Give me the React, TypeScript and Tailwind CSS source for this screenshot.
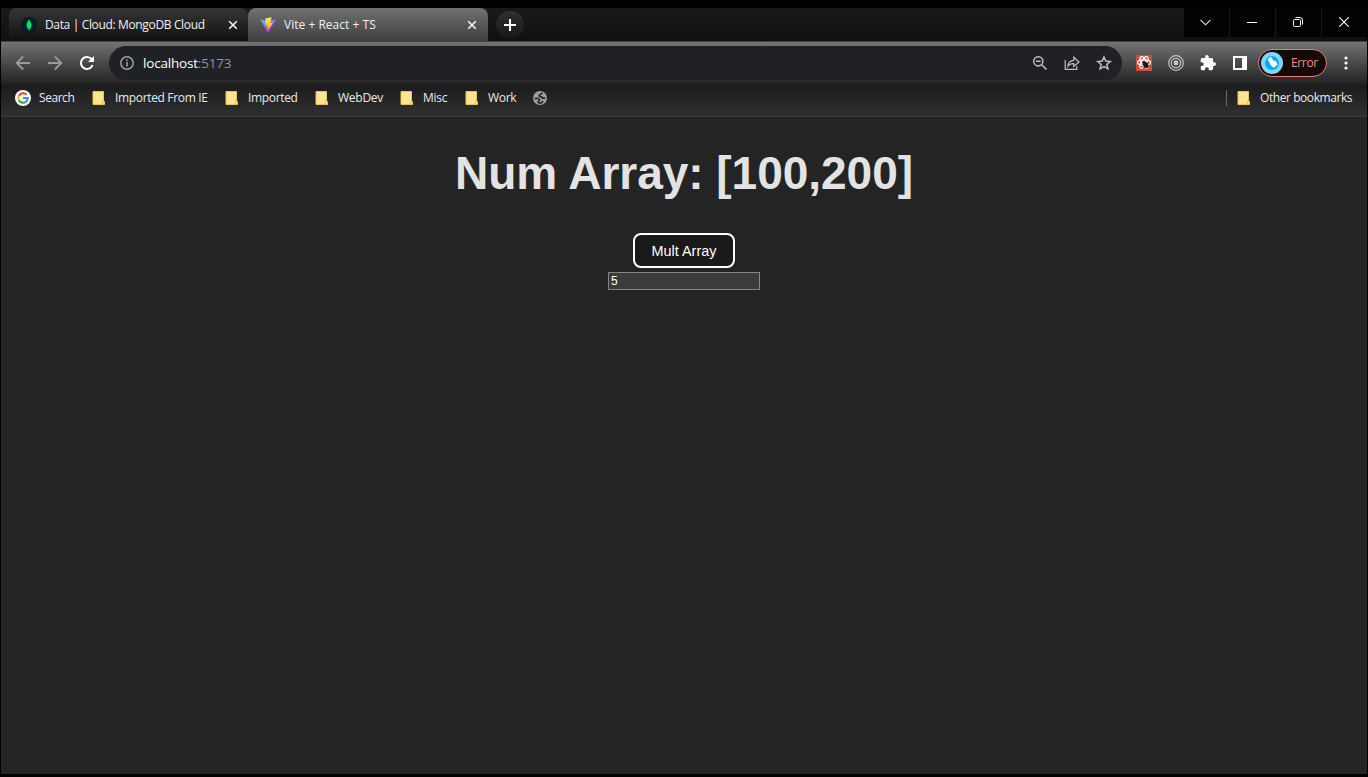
import React from "react";

const ui = "font-['Open_Sans','Noto_Sans',sans-serif]";

function Folder() {
  return (
    <svg width="14" height="16" viewBox="0 0 14 16" className="shrink-0">
      <path d="M1 1.500h10.500v10h1v3H1z" fill="#ffe48f" stroke="#ebc44b" strokeWidth="1" />
      <path d="M10.500 14.500v-3h1" fill="none" stroke="#ebc44b" />
    </svg>
  );
}

function Close() {
  return (
    <svg width="10" height="10" viewBox="0 0 10 10" className="shrink-0">
      <path d="M1.200 1.200l7.600 7.600M8.800 1.200L1.200 8.800" stroke="#f4f4f4" strokeWidth="1.600" />
    </svg>
  );
}

function TabStrip() {
  return (
    <div className="flex h-[33px] shrink-0 bg-gradient-to-b from-[#1a1a1a] to-[#101010] pl-2">
      <div className="flex h-[33px] w-[239px] items-center rounded-t-lg rounded-br-lg bg-gradient-to-b from-[#373737] to-[#111111] pl-3">
        <svg width="16" height="16" viewBox="0 0 16 16" className="shrink-0">
          <circle cx="8" cy="8" r="8" fill="#021e2b" />
          <path d="M8 2.200C6.300 4.500 5.600 6.300 5.600 8.200c0 1.900 1 3.300 2.100 4.100l.1 1.500h.5l.2-1.500c1.100-.8 2-2.200 2-4.100C10.500 6.300 9.700 4.500 8 2.200z" fill="#00ed64" />
          <path d="M8.050 4v9" stroke="#00a857" strokeWidth=".6" />
        </svg>
        <span className="ml-2 w-[183px] pt-px text-[12px] tracking-[-0.35px] text-[#f1f1f1]">Data | Cloud: MongoDB Cloud</span>
        <Close />
      </div>
      <div className="flex h-[33px] w-[240px] items-center rounded-t-lg bg-gradient-to-b from-[#717171] to-[#404040] pl-3">
        <svg width="16" height="16" viewBox="0 0 16 16" className="shrink-0">
          <defs>
            <linearGradient id="viteV" x1="0" y1="0" x2=".5" y2=".8"><stop stopColor="#41d1ff" /><stop offset="1" stopColor="#bd34fe" /></linearGradient>
            <linearGradient id="viteBolt" x1="0" y1="0" x2="0" y2="1"><stop stopColor="#ffea55" /><stop offset="1" stopColor="#ffa800" /></linearGradient>
          </defs>
          <path d="M.3 2.600L8 16l7.800-13.400L8 4z" fill="url(#viteV)" />
          <path d="M11.600.2L5.500 1.300 5.200 7.900l2.300-.4-.6 3.200 1.600-.4-1 4 5.300-8.600-2.400.3z" fill="url(#viteBolt)" />
        </svg>
        <span className="ml-2 w-[183px] pt-px text-[12px] tracking-[0.02px] text-[#f1f1f1]">Vite + React + TS</span>
        <Close />
      </div>
      <div className="mt-[3px] ml-2 flex size-7 items-center justify-center rounded-full bg-gradient-to-b from-[#303030] to-[#171717]">
        <svg width="12" height="12" viewBox="0 0 12 12"><path d="M6 0v12M0 6h12" stroke="#fff" strokeWidth="2" /></svg>
      </div>
      <div className="ml-auto flex h-[29px] w-[183px] bg-[#030303]">
        <div className="flex w-[46px] items-center justify-center border-r border-[#191919] pr-[2px]">
          <svg width="11" height="7" viewBox="0 0 11 7"><path d="M.5.8l5 5 5-5" fill="none" stroke="#e6e6e6" strokeWidth="1.100" /></svg>
        </div>
        <div className="flex w-[46px] items-center justify-center border-r border-[#191919] pr-[2px]">
          <svg width="10" height="10" viewBox="0 0 10 10"><path d="M0 4.500h10" stroke="#fff" /></svg>
        </div>
        <div className="flex w-[46px] items-center justify-center border-r border-[#191919] pr-px pb-px">
          <svg width="10" height="10" viewBox="0 0 10 10" fill="none" stroke="#f0f0f0"><rect x=".5" y="2.500" width="7" height="7" rx="1.300" /><path d="M2.500.5h4.500a2.500 2.500 0 0 1 2.500 2.500v4.500" /></svg>
        </div>
        <div className="flex w-[45px] items-center justify-center pr-px pb-px">
          <svg width="10" height="10" viewBox="0 0 10 10"><path d="M.2.2l9.600 9.600M9.800.2L.2 9.800" stroke="#fff" strokeWidth="1.100" /></svg>
        </div>
      </div>
    </div>
  );
}

function Toolbar() {
  return (
    <div className="flex h-[43px] shrink-0 items-center border-t border-[#424242] bg-gradient-to-b from-[#737373] to-[#232323] pl-[14px]">
      <svg width="16" height="16" viewBox="0 0 16 16" fill="none" stroke="#9a9a9a" strokeWidth="1.800"><path d="M15 8H2M8.200 1.500L1.700 8l6.500 6.500" /></svg>
      <svg className="ml-4" width="16" height="16" viewBox="0 0 16 16" fill="none" stroke="#9a9a9a" strokeWidth="1.800"><path d="M1 8h13M7.800 1.500L14.300 8l-6.500 6.500" /></svg>
      <svg className="ml-4" width="16" height="16" viewBox="0 0 16 16"><path d="M13.600 10A6 6 0 1 1 12.600 4.200L14 5.700" fill="none" stroke="#fff" strokeWidth="2" /><path d="M15 1v6H9z" fill="#fff" /></svg>
      <div className="ml-[14px] flex h-[34px] w-[1013px] shrink-0 items-center rounded-full bg-[#202124] pl-[11px]">
        <svg width="14" height="14" viewBox="0 0 14 14"><circle cx="7" cy="7" r="6.200" fill="none" stroke="#9aa0a6" strokeWidth="1.500" /><path d="M7 6v4.500M7 3.500v1.500" stroke="#9aa0a6" strokeWidth="1.600" /></svg>
        <span className="ml-[9px] text-[13.500px] tracking-[-0.19px] text-[#8e9297]"><span className="text-white">localhost</span>:5173</span>
        <div className="mr-[10px] ml-auto flex items-center gap-4 text-[#bdc1c6]">
          <svg width="16" height="16" viewBox="0 0 16 16" fill="none" stroke="currentColor" strokeWidth="1.500"><circle cx="6.300" cy="6.300" r="4.600" /><path d="M9.700 9.700l4.800 4.800M4 6.300h4.600" /></svg>
          <svg width="16" height="16" viewBox="0 0 16 16" fill="none" stroke="currentColor" strokeWidth="1.200"><path d="M1.200 5v9.400h11.600v-3.200M3.800 11.200c.4-3.800 2.500-5.700 6-5.800V2.200L15 7l-5.200 4.500V8.600C7 8.500 5.200 9.300 3.800 11.200z" /></svg>
          <svg width="16" height="16" viewBox="0 0 16 16" fill="none" stroke="currentColor" strokeWidth="1.500"><path d="M8 2l1.750 4.100 4.450.4-3.350 2.950 1 4.350L8 11.500l-3.850 2.300 1-4.350L1.800 6.500l4.450-.4z" /></svg>
        </div>
      </div>
      <svg className="ml-[14px] shrink-0" width="16" height="16" viewBox="0 0 16 16">
        <path d="M0 0h16v16H0z" fill="#d94a3b" />
        <g fill="none" stroke="#fff" strokeWidth="1.200"><ellipse cx="8" cy="7.500" rx="6.500" ry="2.600" /><ellipse cx="8" cy="7.500" rx="6.500" ry="2.600" transform="rotate(60 8 7.500)" /><ellipse cx="8" cy="7.500" rx="6.500" ry="2.600" transform="rotate(120 8 7.500)" /></g>
        <ellipse cx="9.800" cy="10.200" rx="2.500" ry="3.200" fill="#201b1b" transform="rotate(-30 9.800 10.200)" /><circle cx="7.700" cy="7.500" r="1.300" fill="#201b1b" /><path d="M6.500 9.500l6.500 1.500M7.500 13l5-5.500" stroke="#201b1b" />
      </svg>
      <svg className="ml-4 shrink-0" width="16" height="16" viewBox="0 0 16 16" fill="none" stroke="#c4c4c4" strokeWidth="1.200"><circle cx="8" cy="8" r="7.300" /><circle cx="8" cy="8" r="4.700" /><circle cx="8" cy="8" r="2.400" fill="#c4c4c4" stroke="none" /></svg>
      <svg className="ml-4 shrink-0" width="16" height="16" viewBox="1 1 22 22"><path fill="#fff" d="M20.500 11H19V7c0-1.100-.9-2-2-2h-4V3.500a2.500 2.500 0 0 0-5 0V5H4c-1.100 0-2 .9-2 2v3.800h1.500a2.700 2.700 0 0 1 0 5.400H2V20c0 1.100.9 2 2 2h3.800v-1.500a2.700 2.700 0 0 1 5.400 0V22H17c1.100 0 2-.9 2-2v-4h1.500a2.500 2.500 0 0 0 0-5z" /></svg>
      <svg className="ml-[17px] shrink-0" width="14" height="14" viewBox="0 0 14 14"><path fill="#fff" fillRule="evenodd" d="M0 0h14v14H0zM2 2v10h7V2z" /></svg>
      <div className="ml-[11px] flex h-7 w-[69px] shrink-0 items-center rounded-full border border-[#e77e76] bg-[#150a09] pl-[2px]">
        <svg width="22" height="22" viewBox="0 0 22 22" className="shrink-0"><circle cx="11" cy="11" r="11" fill="#80d8ff" /><circle cx="11" cy="11" r="7" fill="#0ba8f4" /><path d="M6.500 7.200l3.600-2.400 2.200 3.700 2.900 1.100 1.300 3.200-3.600 3-3.400-2.700-.8-2.400z" fill="#fff" /></svg>
        <span className="ml-2 text-[12px] tracking-[-0.35px] text-[#f28b82]">Error</span>
      </div>
      <svg className="ml-[16.500px] shrink-0" width="4" height="14" viewBox="0 0 4 14" fill="#fff"><circle cx="2" cy="2" r="1.600" /><circle cx="2" cy="7" r="1.600" /><circle cx="2" cy="12" r="1.600" /></svg>
    </div>
  );
}

function Bookmark({ label, width, tracking = "tracking-[-0.25px]" }: { label: string; width: string; tracking?: string }) {
  return (
    <div className={`flex shrink-0 items-center ${width}`}>
      <Folder />
      <span className={`ml-[9px] text-[12px] whitespace-nowrap ${tracking}`}>{label}</span>
    </div>
  );
}

function Bookmarks() {
  return (
    <div className="flex h-[33px] shrink-0 items-center border-b border-[#3b3b3b] bg-gradient-to-b from-[#1b1b1b] to-[#303030] pb-[4px] pl-[14px] text-[#e8eaed]">
      <svg width="16" height="16" viewBox="0 0 16 16" fill="none" strokeWidth="2.100" className="shrink-0">
        <circle cx="8" cy="8" r="8" fill="#fff" />
        <path d="M11.500 4.700A4.700 4.700 0 0 0 3.900 5.900" stroke="#ea4335" />
        <path d="M3.900 5.700a4.800 4.800 0 0 0 0 4.600" stroke="#fbbc05" />
        <path d="M3.900 10.200a4.700 4.700 0 0 0 7.400 1.200" stroke="#34a853" />
        <path d="M11.200 11.500c1-.9 1.500-2 1.500-3.500H8" stroke="#4285f4" />
      </svg>
      <span className="ml-2 w-[53px] text-[12px] tracking-[-0.45px]">Search</span>
      <Bookmark label="Imported From IE" width="w-[133px]" tracking="tracking-[-0.34px]" />
      <Bookmark label="Imported" width="w-[90px]" tracking="tracking-[-0.34px]" />
      <Bookmark label="WebDev" width="w-[85px]" />
      <Bookmark label="Misc" width="w-[65px]" />
      <Bookmark label="Work" width="w-[68px]" tracking="tracking-[-0.3px]" />
      <svg width="14" height="14" viewBox="0 0 14 14">
        <circle cx="7" cy="7" r="7" fill="#9aa0a6" />
        <path d="M9.200 1.700C8.900 3.500 6 2.900 6 4.700c0 1.500 3.600.4 3.600 2.500h2.700M1.500 7.500c2.700-.3 5-.2 5 1.200 0 1-1.300 1.200-1.300 2.200 0 .8.900 1 1.800 1.200 1.600.2 2.400-1.200 3-2.100" fill="none" stroke="#272727" strokeWidth="1.700" />
      </svg>
      <div className="ml-auto h-4 w-px bg-[#686868]" />
      <div className="ml-[10px]"><Bookmark label="Other bookmarks" width="w-[130px]" tracking="tracking-[-0.43px]" /></div>
    </div>
  );
}

export default function App() {
  return (
    <div className="h-[777px] w-[1368px] overflow-hidden bg-black pt-2 pr-px pb-[3px] pl-px">
      <div className={`flex h-full flex-col bg-[#242424] ${ui}`}>
        <TabStrip />
        <Toolbar />
        <Bookmarks />
        <main className="flex flex-1 flex-col items-center font-['Liberation_Sans',Arial,sans-serif]">
          <h1 className="mt-[31px] text-[46.080px] leading-[50px] font-bold tracking-[-0.06px] whitespace-nowrap text-[#e3e3e3]">Num Array: [100,200]</h1>
          <button className="mt-[35px] flex h-[35px] w-[102px] items-center justify-center rounded-lg border-2 border-white bg-[#1a1a1a] pt-[2px] text-[14.400px] tracking-[0.02px] whitespace-nowrap text-white">Mult Array</button>
          <input className="mt-1 h-[18px] w-[152px] border border-[#858585] bg-[#3b3b3b] pl-[2px] text-[12px] text-white outline-none" defaultValue="5" />
        </main>
      </div>
    </div>
  );
}
